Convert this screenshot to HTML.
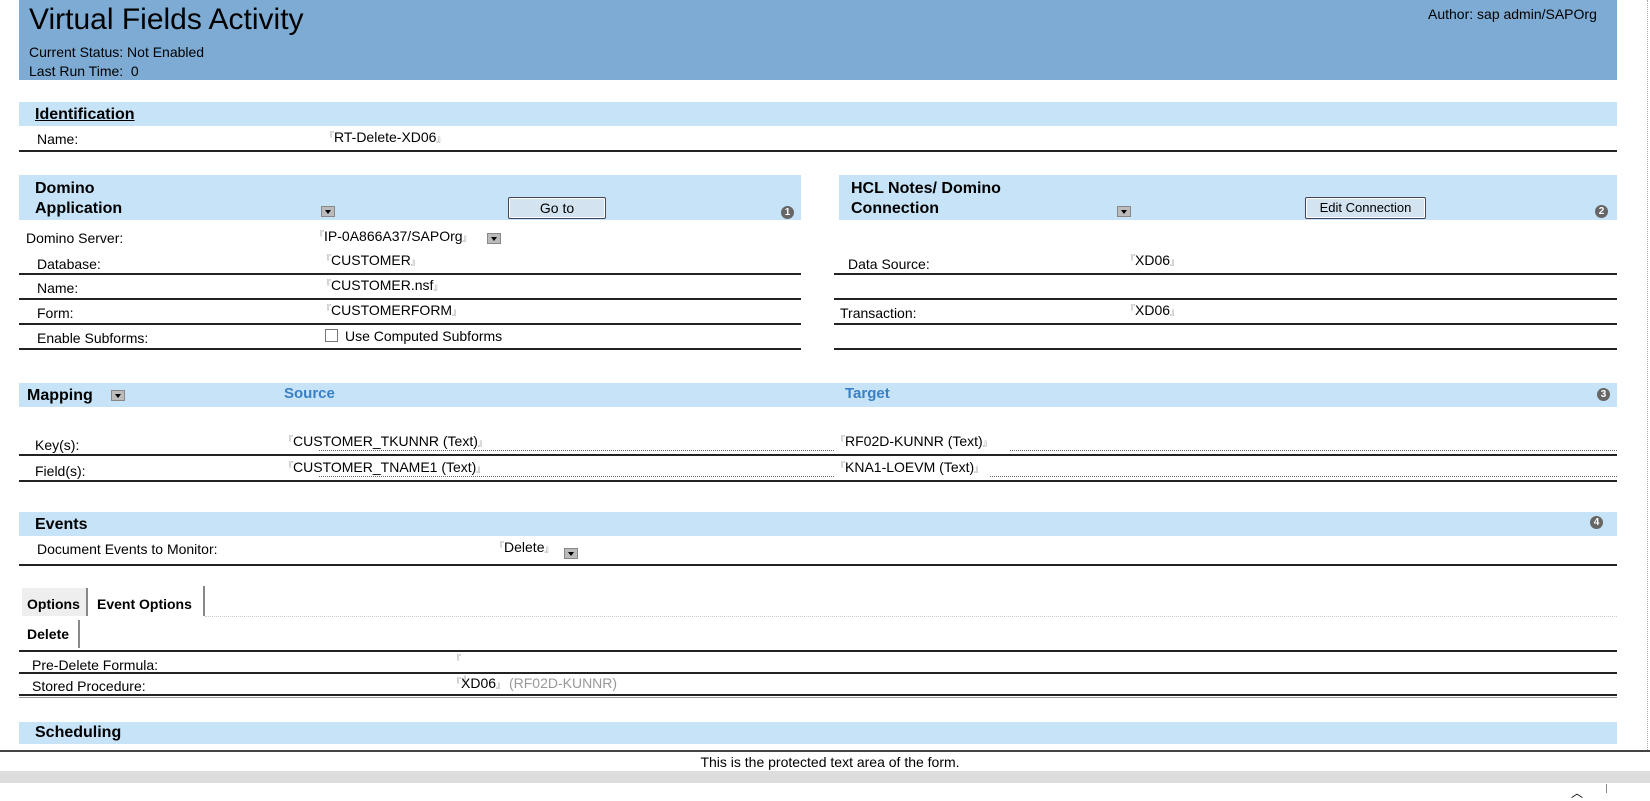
<!DOCTYPE html>
<html><head><meta charset="utf-8"><style>
*{margin:0;padding:0;box-sizing:border-box}
body{width:1650px;height:793px;overflow:hidden;background:#fff;font-family:"Liberation Sans",Arial,sans-serif;font-size:14px;color:#000;position:relative}
.a{position:absolute;white-space:nowrap}
.hdr{background:#7eabd3}
.bar{background:#c6e3f7}
.ln{position:absolute;height:2px;background:#222}
.h{font-weight:bold;font-size:16px}
.dd{position:absolute;width:14px;height:11px;background:#bbb;border:1px solid #888}
.dd:after{content:"";position:absolute;left:3px;top:3px;border-left:3px solid transparent;border-right:3px solid transparent;border-top:4px solid #000}
.btn{position:absolute;background:#d3e3f0;border:1px solid #445;border-radius:2px;text-align:center;font-size:14px;box-shadow:inset 0 0 0 1px #fff}
.num{position:absolute;width:13px;height:13px;border-radius:50%;background:#666;color:#fff;font-size:10px;font-weight:bold;text-align:center;line-height:13px}
.m{font-size:9px;color:#777;vertical-align:top}
.m2{font-size:9px;color:#777;vertical-align:bottom}
.dot{position:absolute;height:0;border-top:1px dotted #666}
.blue{color:#3b7fc4;font-weight:bold;font-size:15px}
</style></head><body>
<div class="a hdr" style="left:19px;top:0;width:1598px;height:80px"></div>
<div class="a" style="left:29px;top:3px;font-size:30px">Virtual Fields Activity</div>
<div class="a" style="left:29px;top:44px;font-size:14px">Current Status: Not Enabled</div>
<div class="a" style="left:29px;top:63px;font-size:14px">Last Run Time:&nbsp; 0</div>
<div class="a" style="left:1428px;top:6px;font-size:14px">Author: sap admin/SAPOrg</div>

<div class="a bar" style="left:19px;top:102px;width:1598px;height:24px"></div>
<div class="a h" style="left:35px;top:106px;text-decoration:underline">Identification</div>
<div class="a" style="left:37px;top:131px">Name:</div>
<div class="a" style="left:325px;top:129px"><span class="m">『</span>RT-Delete-XD06<span class="m2">』</span></div>
<div class="ln" style="left:19px;top:150px;width:1598px"></div>

<div class="a bar" style="left:19px;top:175px;width:782px;height:45px"></div>
<div class="a h" style="left:35px;top:179px;line-height:20px">Domino<br>Application</div>
<div class="dd" style="left:321px;top:206px"></div>
<div class="btn" style="left:508px;top:197px;width:98px;height:22px;line-height:20px">Go to</div>
<div class="num" style="left:781px;top:206px">1</div>
<div class="a bar" style="left:839px;top:175px;width:778px;height:45px"></div>
<div class="a h" style="left:851px;top:179px;line-height:20px">HCL Notes/ Domino<br>Connection</div>
<div class="dd" style="left:1117px;top:206px"></div>
<div class="btn" style="left:1305px;top:197px;width:121px;height:22px;line-height:20px;font-size:13px">Edit Connection</div>
<div class="num" style="left:1595px;top:205px">2</div>

<div class="a" style="left:26px;top:230px">Domino Server:</div>
<div class="a" style="left:315px;top:228px"><span class="m">『</span>IP-0A866A37/SAPOrg<span class="m2">』</span></div>
<div class="dd" style="left:487px;top:233px"></div>
<div class="a" style="left:37px;top:256px">Database:</div>
<div class="a" style="left:322px;top:252px"><span class="m">『</span>CUSTOMER<span class="m2">』</span></div>
<div class="ln" style="left:19px;top:273px;width:782px"></div>
<div class="a" style="left:37px;top:280px">Name:</div>
<div class="a" style="left:322px;top:277px"><span class="m">『</span>CUSTOMER.nsf<span class="m2">』</span></div>
<div class="ln" style="left:19px;top:298px;width:782px"></div>
<div class="a" style="left:37px;top:305px">Form:</div>
<div class="a" style="left:322px;top:302px"><span class="m">『</span>CUSTOMERFORM<span class="m2">』</span></div>
<div class="ln" style="left:19px;top:323px;width:782px"></div>
<div class="a" style="left:37px;top:330px">Enable Subforms:</div>
<div class="a" style="left:325px;top:329px;width:13px;height:13px;border:1px solid #777;background:#fff"></div>
<div class="a" style="left:345px;top:328px">Use Computed Subforms</div>
<div class="ln" style="left:19px;top:348px;width:782px"></div>

<div class="a" style="left:848px;top:256px">Data Source:</div>
<div class="a" style="left:1126px;top:252px"><span class="m">『</span>XD06<span class="m2">』</span></div>
<div class="ln" style="left:834px;top:273px;width:783px"></div>
<div class="ln" style="left:834px;top:298px;width:783px"></div>
<div class="a" style="left:840px;top:305px">Transaction:</div>
<div class="a" style="left:1126px;top:302px"><span class="m">『</span>XD06<span class="m2">』</span></div>
<div class="ln" style="left:834px;top:323px;width:783px"></div>
<div class="ln" style="left:834px;top:348px;width:783px"></div>

<div class="a bar" style="left:19px;top:383px;width:1598px;height:24px"></div>
<div class="a h" style="left:27px;top:387px">Mapping</div>
<div class="dd" style="left:111px;top:390px"></div>
<div class="a blue" style="left:284px;top:385px">Source</div>
<div class="a blue" style="left:845px;top:385px">Target</div>
<div class="num" style="left:1597px;top:388px">3</div>

<div class="a" style="left:35px;top:437px">Key(s):</div>
<div class="a" style="left:284px;top:433px"><span class="m">『</span>CUSTOMER_TKUNNR (Text)<span class="m2">』</span></div>
<div class="dot" style="left:319px;top:450px;width:515px"></div>
<div class="a" style="left:836px;top:433px"><span class="m">『</span>RF02D-KUNNR (Text)<span class="m2">』</span></div>
<div class="dot" style="left:1010px;top:450px;width:607px"></div>
<div class="ln" style="left:19px;top:454px;width:1598px"></div>
<div class="a" style="left:35px;top:463px">Field(s):</div>
<div class="a" style="left:284px;top:459px"><span class="m">『</span>CUSTOMER_TNAME1 (Text)<span class="m2">』</span></div>
<div class="dot" style="left:319px;top:476px;width:515px"></div>
<div class="a" style="left:836px;top:459px"><span class="m">『</span>KNA1-LOEVM (Text)<span class="m2">』</span></div>
<div class="dot" style="left:990px;top:476px;width:627px"></div>
<div class="ln" style="left:19px;top:480px;width:1598px"></div>

<div class="a bar" style="left:19px;top:512px;width:1598px;height:24px"></div>
<div class="a h" style="left:35px;top:516px">Events</div>
<div class="num" style="left:1590px;top:516px">4</div>
<div class="a" style="left:37px;top:541px">Document Events to Monitor:</div>
<div class="a" style="left:495px;top:539px"><span class="m">『</span>Delete<span class="m2">』</span></div>
<div class="dd" style="left:564px;top:548px"></div>
<div class="ln" style="left:19px;top:564px;width:1598px"></div>

<div class="a" style="left:22px;top:588px;width:66px;height:28px;background:#eee;border-right:2px solid #888"></div>
<div class="a" style="left:27px;top:596px;font-weight:bold;font-size:14px">Options</div>
<div class="a" style="left:90px;top:586px;width:115px;height:30px;background:#fff;border-right:2px solid #888"></div>
<div class="a" style="left:97px;top:596px;font-weight:bold;font-size:14px">Event Options</div>
<div class="dot" style="left:205px;top:616px;width:1412px;border-color:#ccc"></div>
<div class="a" style="left:20px;top:620px;width:60px;height:28px;border-right:2px solid #888"></div>
<div class="a" style="left:27px;top:626px;font-weight:bold;font-size:14px">Delete</div>
<div class="ln" style="left:19px;top:650px;width:1598px"></div>
<div class="a" style="left:32px;top:657px">Pre-Delete Formula:</div>
<div class="a" style="left:452px;top:652px"><span class="m">『</span><br><span class="m2" style="margin-left:10px">』</span></div>
<div class="ln" style="left:19px;top:672px;width:1598px"></div>
<div class="a" style="left:32px;top:678px">Stored Procedure:</div>
<div class="a" style="left:452px;top:675px"><span class="m">『</span>XD06<span class="m2">』</span> <span style="color:#999">(RF02D-KUNNR)</span></div>
<div class="ln" style="left:19px;top:694px;width:1598px"></div>
<div class="a" style="left:19px;top:697px;width:1598px;height:1px;background:#999"></div>

<div class="a bar" style="left:19px;top:722px;width:1598px;height:22px"></div>
<div class="a h" style="left:35px;top:724px">Scheduling</div>
<div class="a" style="left:0;top:750px;width:1650px;height:2px;background:#444"></div>
<div class="a" style="left:0;top:752px;width:1650px;height:20px;background:#fff"></div>
<div class="a" style="left:0;top:754px;width:1650px;text-align:center;font-size:14px;padding-left:10px">This is the protected text area of the form.</div>
<div class="a" style="left:0;top:771px;width:1650px;height:12px;background:#ddd"></div>
<div class="a" style="left:1571px;top:784px;font-size:12px">︿</div>
<div class="a" style="left:1606px;top:784px;width:1px;height:9px;background:#888"></div>
<div class="a" style="left:1647px;top:0;width:1px;height:750px;border-left:1px dotted #aaa"></div>
</body></html>
